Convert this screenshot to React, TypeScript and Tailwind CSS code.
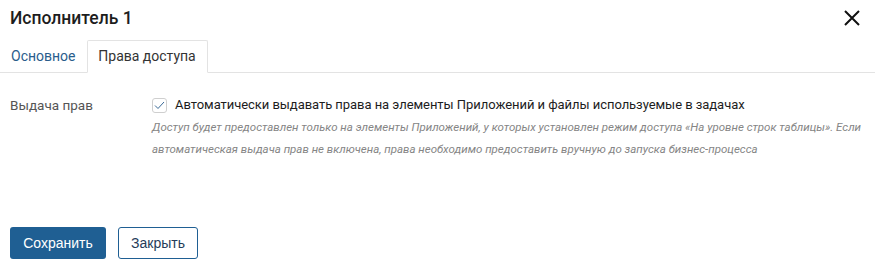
import React, { useState } from 'react';

const App: React.FC = () => {
  const [checked, setChecked] = useState(true);

  return (
    <div className="w-[875px] h-[267px] bg-white flex flex-col text-[#222] font-['Roboto',sans-serif]">
      {/* ── Header ── */}
      <div className="flex items-center justify-between h-[36px] pl-[10px] pr-[14px]">
        <h2 className="text-[17.5px] font-medium text-[#1d1d1d]">Исполнитель 1</h2>
        <button aria-label="Закрыть" className="w-[18px] h-[18px] flex items-center justify-center">
          <svg width="16" height="16" viewBox="0 0 16 16">
            <path d="M1 1L15 15M15 1L1 15" stroke="#111" strokeWidth="2" />
          </svg>
        </button>
      </div>

      {/* ── Tabs ── */}
      <div className="flex items-end h-[37px] border-b border-[#e3e3e3]">
        <button className="h-[32px] px-[11px] text-[14px] text-[#2a5d8c]">Основное</button>
        <button className="h-[33px] w-[121px] text-[14px] text-[#333] border border-[#e3e3e3] border-b-white -mb-px bg-white rounded-t-[2px]">
          Права доступа
        </button>
      </div>

      {/* ── Body ── */}
      <div className="flex pt-[22px] pl-[10px]">
        <div className="w-[142px] text-[13.5px] text-[#555] leading-[20px]">Выдача прав</div>
        <div className="flex-1">
          <label className="flex items-center gap-[8px] h-[20px] cursor-pointer">
            <span
              onClick={() => setChecked(v => !v)}
              className="w-[15px] h-[15px] rounded-[3px] border border-[#cfcfcf] flex items-center justify-center bg-white"
            >
              {checked && (
                <svg width="11" height="9" viewBox="0 0 11 9">
                  <path d="M1 4.5L4 7.5L10 1" fill="none" stroke="#3a6a97" strokeWidth="1" />
                </svg>
              )}
            </span>
            <span className="text-[13px] tracking-[-0.05px] text-[#1d1d1d]">
              Автоматически выдавать права на элементы Приложений и файлы используемые в задачах
            </span>
          </label>
          <p className="mt-[1px] text-[11.5px] italic leading-[22px] text-[#858585] pr-[6px]">
            Доступ будет предоставлен только на элементы Приложений, у которых установлен режим доступа «На уровне строк таблицы». Если автоматическая выдача прав не включена, права необходимо предоставить вручную до запуска бизнес-процесса
          </p>
        </div>
      </div>

      {/* ── Footer ── */}
      <div className="mt-auto flex gap-[12px] pl-[10px] pb-[8px]">
        <button className="h-[32px] w-[96px] rounded-[3px] bg-[#1f5f93] text-white text-[14px] font-medium font-['Liberation_Sans',sans-serif]">
          Сохранить
        </button>
        <button className="h-[32px] w-[80px] rounded-[3px] border border-[#1f5f93] bg-white text-[#253c5a] text-[14px] font-['Liberation_Sans',sans-serif]">
          Закрыть
        </button>
      </div>
    </div>
  );
};

export default App;
